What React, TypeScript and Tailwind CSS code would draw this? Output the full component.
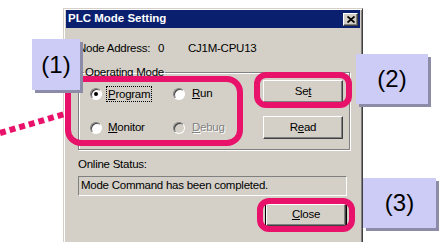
import React from 'react';

const raised =
  'bg-[#d4d0c8] border border-t-white border-l-white border-r-[#404040] border-b-[#404040] shadow-[inset_-1px_-1px_0_#808080]';

function Radio({ checked, disabled }: { checked?: boolean; disabled?: boolean }) {
  return (
    <span
      className={`flex h-[12px] w-[12px] items-center justify-center rounded-full border border-t-[#808080] border-l-[#808080] border-r-white border-b-white shadow-[inset_1px_1px_0_#404040] ${
        disabled ? 'bg-[#d4d0c8]' : 'bg-white'
      }`}
    >
      {checked && <span className="h-[4px] w-[4px] rounded-full bg-black" />}
    </span>
  );
}

function Label({ children }: { children: React.ReactNode }) {
  return (
    <div className="flex h-full w-full items-center justify-center bg-[#ccccf7] text-[24px] leading-none tracking-normal text-black shadow-[3px_3px_0_#8c8ca8]">
      {children}
    </div>
  );
}

function Highlight({ className }: { className: string }) {
  return <div className={`absolute border-[6px] border-[#e8126b] ${className}`} />;
}

export default function App() {
  return (
    <div className="relative h-[242px] w-[439px] overflow-hidden bg-white font-['Liberation_Sans',Arial,sans-serif] text-[11.5px] tracking-[-0.25px] text-black">
      {/* dialog */}
      <div className="ml-[63px] mt-[8px] h-[250px] w-[300px] border border-t-[#d4d0c8] border-l-[#d4d0c8] border-r-[#404040] bg-[#d4d0c8] px-[2px] pt-[1px] shadow-[inset_1px_1px_0_#fff,inset_-1px_0_0_#808080]">
        <div className="flex h-[18px] items-center justify-between bg-[#0a1f6e] pl-[2px] pr-[2px]">
          <span className="text-[11.5px] font-bold tracking-normal text-white">PLC Mode Setting</span>
          <span className={`${raised} flex h-[13px] w-[15px] items-center justify-center`}>
            <svg width="8" height="7" viewBox="0 0 8 7">
              <path d="M0.5 0.5 L7.5 6.5 M7.5 0.5 L0.5 6.5" stroke="#000" strokeWidth="1.8" />
            </svg>
          </span>
        </div>

        <div className="pl-[12px] pr-[10px]">
          <div className="mt-[13px] flex h-[14px] items-center leading-[14px]">
            <span className="w-[80px]">Node Address:</span>
            <span className="w-[30px]">0</span>
            <span>CJ1M-CPU13</span>
          </div>

          <fieldset className="mt-[10px] h-[85px] border border-[#808080] shadow-[inset_1px_1px_0_#fff,1px_1px_0_#fff]">
            <legend className="ml-[5px] h-[14px] px-[1px] leading-[14px]">Operating Mode</legend>
            <div className="flex">
              <div className="ml-[11px] mt-[8px] grid grid-cols-[83px_auto] gap-y-[16px]">
                <div className="flex h-[14px] items-center gap-[4px]">
                  <Radio checked />
                  <span className="border border-dotted border-black px-[1px] py-[1px] leading-[12px]">
                    <span className="underline">P</span>rogram
                  </span>
                </div>
                <div className="flex h-[14px] items-center gap-[7px]">
                  <Radio />
                  <span>
                    <span className="underline">R</span>un
                  </span>
                </div>
                <div className="flex h-[14px] items-center gap-[6px]">
                  <Radio />
                  <span>
                    <span className="underline">M</span>onitor
                  </span>
                </div>
                <div className="flex h-[14px] items-center gap-[7px]">
                  <Radio disabled />
                  <span className="text-[#808080] [text-shadow:1px_1px_0_#fff]">
                    <span className="underline">D</span>ebug
                  </span>
                </div>
              </div>
              <div className="ml-auto mr-[6px] mt-[1px] flex flex-col gap-[13px]">
                <button className={`${raised} flex h-[23px] w-[80px] items-center justify-center`}>
                  Se<span className="underline">t</span>
                </button>
                <button className={`${raised} flex h-[23px] w-[80px] items-center justify-center`}>
                  R<span className="underline">e</span>ad
                </button>
              </div>
            </div>
          </fieldset>

          <div className="mt-[7px] h-[14px] leading-[14px]">Online Status:</div>
          <div className="mt-[5px] flex h-[20px] w-[269px] items-center border border-t-[#808080] border-l-[#808080] border-r-white border-b-white pl-[2px]">
            Mode Command has been completed.
          </div>
          <div className="mt-[7px] flex w-[269px] justify-end">
            <div className="border border-black">
              <button className={`${raised} flex h-[22px] w-[80px] items-center justify-center`}>
                <span className="underline">C</span>lose
              </button>
            </div>
          </div>
        </div>
      </div>

      {/* annotations */}
      <svg className="absolute left-0 top-[108px]" width="70" height="30" viewBox="0 0 70 30">
        <line x1="0" y1="25" x2="68" y2="5" stroke="#e8126b" strokeWidth="6" strokeDasharray="6 4" />
      </svg>
      <Highlight className="left-[65px] top-[76px] h-[70px] w-[178px] rounded-[16px]" />
      <Highlight className="left-[254px] top-[72px] h-[36px] w-[98px] rounded-[12px]" />
      <Highlight className="left-[257px] top-[198px] h-[34px] w-[98px] rounded-[12px]" />

      <div className="absolute left-[32px] top-[39px] h-[51px] w-[48px]">
        <Label>(1)</Label>
      </div>
      <div className="absolute left-[356px] top-[54px] h-[50px] w-[72px]">
        <Label>(2)</Label>
      </div>
      <div className="absolute left-[363px] top-[178px] h-[50px] w-[73px]">
        <Label>(3)</Label>
      </div>
    </div>
  );
}
